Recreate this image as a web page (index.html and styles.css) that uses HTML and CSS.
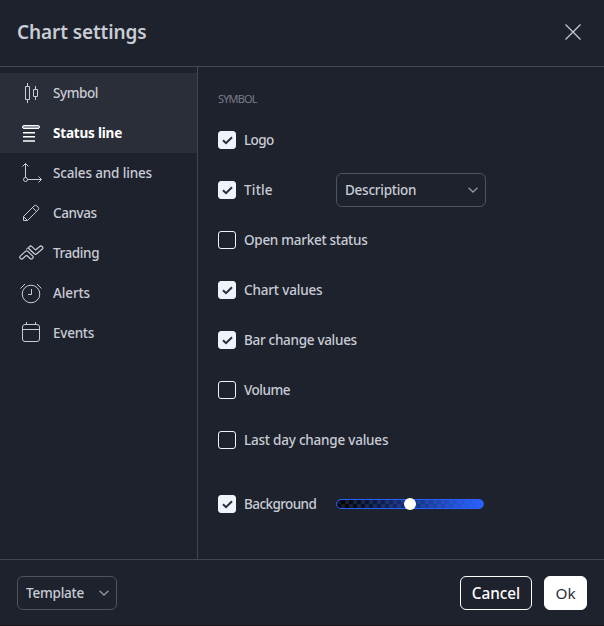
FILE: index.html
```html
<!DOCTYPE html>
<html lang="en">
<head>
<meta charset="utf-8">
<title>Chart settings</title>
<link rel="stylesheet" href="styles.css">
</head>
<body>
<div class="dialog">
  <header class="header">
    <h1 class="title">Chart settings</h1>
    <svg class="close" viewBox="0 0 18 18"><path d="M1.5 1.5l15 15M16.5 1.5l-15 15"/></svg>
  </header>
  <div class="body">
    <nav class="tabs">
      <div class="tab hover"><svg class="icon" viewBox="0 0 28 28"><path d="M8.5 7.5h4v13h-4zM10.500 4v3.500M10.500 20.500V24M16.500 10.500h4v7h-4zM18.500 7v3.500M18.500 17.500V21"/></svg><span class="t-symbol">Symbol</span></div>
      <div class="tab active"><svg class="icon" viewBox="0 0 28 28"><rect class="bar" x="5.500" y="6.500" width="17" height="3" rx="1.500"/><path class="lines" d="M6 13.700h12M6 17.700h12M6 21.900h12"/></svg><span class="t-status">Status line</span></div>
      <div class="tab"><svg class="icon" viewBox="0 0 28 28"><circle cx="8.500" cy="20.500" r="2"/><path d="M8.500 18.500V4.500M5.500 7.500l3-3 3 3M10.500 20.500h14M21.500 17.500l3 3-3 3"/></svg><span class="t-scales">Scales and lines</span></div>
      <div class="tab"><svg class="icon" viewBox="0 0 28 28"><path d="M6.500 17.500L17 7q1.500-1.500 3 0l1 1q1.500 1.500 0 3L10.500 21.500h-4zM6.500 17.500l4 4M15.500 8.500l4 4"/></svg><span class="t-canvas">Canvas</span></div>
      <div class="tab"><svg class="icon" viewBox="0 0 28 28"><path class="outer" d="M4.700 18.200L9.600 13.700 14.300 18.200M13.700 8.900L18.600 13.400 23.900 8.900"/><path d="M9 10.500l2-1.700 5.500 5.500"/><path class="inner" d="M4.700 18.200L9.600 13.700 14.300 18.200M13.700 8.900L18.600 13.400 23.900 8.900"/></svg><span class="t-trading">Trading</span></div>
      <div class="tab"><svg class="icon" viewBox="0 0 28 28"><circle cx="14" cy="15" r="8.800"/><path d="M14.500 10v5.500H11M3.500 9.500L8 5M20 5l4.500 4.500"/></svg><span class="t-alerts">Alerts</span></div>
      <div class="tab"><svg class="icon" viewBox="0 0 28 28"><rect x="5.500" y="5.500" width="17" height="17" rx="2.500"/><path d="M5.500 10.500h17M9.500 3v2.500M18.500 3v2.500"/></svg><span class="t-events">Events</span></div>
    </nav>
    <main class="content">
      <h2 class="section">SYMBOL</h2>
      <div class="row"><span class="box on"><svg viewBox="0 0 18 18"><path d="M5 9.200l3 3 6-6"/></svg></span><span class="l-logo">Logo</span></div>
      <div class="row"><div class="name"><span class="box on"><svg viewBox="0 0 18 18"><path d="M5 9.200l3 3 6-6"/></svg></span><span class="l-title">Title</span></div>
        <div class="select wide"><span class="l-desc">Description</span><svg class="caret" viewBox="0 0 10 6"><path d="M.5 .7L5 5l4.500-4.300"/></svg></div></div>
      <div class="row"><span class="box"></span><span class="l-open">Open market status</span></div>
      <div class="row"><span class="box on"><svg viewBox="0 0 18 18"><path d="M5 9.200l3 3 6-6"/></svg></span><span class="l-chart">Chart values</span></div>
      <div class="row"><span class="box on"><svg viewBox="0 0 18 18"><path d="M5 9.200l3 3 6-6"/></svg></span><span class="l-bar">Bar change values</span></div>
      <div class="row"><span class="box"></span><span class="l-volume">Volume</span></div>
      <div class="row"><span class="box"></span><span class="l-last">Last day change values</span></div>
      <div class="row last"><div class="name"><span class="box on"><svg viewBox="0 0 18 18"><path d="M5 9.200l3 3 6-6"/></svg></span><span class="l-back">Background</span></div>
        <div class="slider"><span class="thumb"></span></div></div>
    </main>
  </div>
  <footer class="footer">
    <div class="select"><span class="l-template">Template</span><svg class="caret" viewBox="0 0 10 6"><path d="M.5 .7L5 5l4.500-4.300"/></svg></div>
    <div class="actions"><button class="btn cancel">Cancel</button><button class="btn ok">Ok</button></div>
  </footer>
</div>
</body>
</html>
```
FILE: styles.css
```css
* { box-sizing: border-box; }
body { margin: 0; background: #1e222d; color: #c9ccd5; font: 500 13.5px/20px "Noto Sans", sans-serif; }
svg { fill: none; stroke: currentColor; display: block; flex: none; }
span { white-space: nowrap; }
.dialog { width: 604px; height: 626px; display: flex; flex-direction: column; border-bottom: 1px solid #171720; }
.header { height: 67px; display: flex; align-items: center; justify-content: space-between; padding: 0 22px 2px 17px; border-bottom: 1px solid #434651; }
.title { margin: 0; font-size: 19px; line-height: 28px; font-weight: 600; letter-spacing: -.1px; }
.close { width: 18px; height: 18px; stroke-width: 1.2; }
.body { display: flex; height: 492px; }
.tabs { width: 198px; padding-top: 6px; border-right: 1px solid #434651; }
.tab { height: 40px; display: flex; align-items: center; gap: 8px; padding-left: 17px; }
.hover, .active { background: #2a2e39; }
.active { color: #fff; font-weight: 700; }
.icon { width: 28px; height: 28px; }
.bar { fill: #9598a1; }
.lines { stroke-width: 1.5; }
.outer { stroke-width: 4.8; stroke-linecap: round; stroke-linejoin: round; }
.inner { stroke: #1e222d; stroke-width: 2.4; stroke-linecap: round; stroke-linejoin: round; }
.content { flex: 1; padding: 22px 0 0 20px; }
.section { margin: 0 0 6px; font-size: 11px; line-height: 20px; font-weight: 400; color: #787b86; letter-spacing: -.85px; }
.row { height: 50px; display: flex; align-items: center; gap: 8px; }
.name { width: 110px; display: flex; align-items: center; gap: 8px; }
.last { margin-top: 14px; }
.box { width: 18px; height: 18px; flex: none; border: 1px solid #f0f3fa; border-radius: 3px; }
.on { background: #f0f3fa; color: #2a2e39; }
.on svg { width: 18px; height: 18px; margin: -1px; stroke-width: 2; }
.select { width: 100px; height: 34px; display: flex; align-items: center; justify-content: space-between; padding: 0 7px 0 8px; border: 1px solid #50535e; border-radius: 6px; }
.wide { width: 150px; }
.caret { width: 10px; height: 6px; color: #9598a1; stroke-width: 1.3; }
.slider { width: 148px; height: 10px; display: flex; align-items: center; justify-content: center; border: 1px solid #2962ff; border-radius: 5px; background: linear-gradient(90deg, #2962ff00 0, #2962ff 100%), repeating-conic-gradient(#000 0 25%, #161922 0 50%) 0 0 / 8px 8px; }
.thumb { width: 12px; height: 12px; flex: none; border-radius: 50%; background: #fff; }
.footer { height: 66px; display: flex; align-items: center; justify-content: space-between; padding: 0 17px; border-top: 1px solid #434651; }
.actions { display: flex; gap: 12px; }
.btn { height: 34px; padding: 0; border: 1px solid #fff; border-radius: 6px; font: 500 15.3px/22px "Noto Sans", sans-serif; }
.cancel { width: 72px; background: none; color: #fff; }
.ok { width: 43px; background: #fff; color: #2a2e39; font-weight: 400; }
.t-symbol { letter-spacing: -.45px; }
.t-status { letter-spacing: -.2px; }
.t-scales { letter-spacing: -.15px; }
.t-canvas { letter-spacing: -.4px; }
.t-trading { letter-spacing: -.4px; }
.t-alerts { letter-spacing: -.1px; }
.t-events { letter-spacing: -.25px; }
.l-logo { letter-spacing: -.6px; }
.l-title { letter-spacing: .2px; }
.l-desc { letter-spacing: -.25px; }
.l-open { letter-spacing: -.28px; }
.l-chart { letter-spacing: -.16px; }
.l-bar { letter-spacing: -.3px; }
.l-volume { letter-spacing: -.5px; }
.l-last { letter-spacing: -.22px; }
.l-back { letter-spacing: -.58px; }
.l-template { letter-spacing: -.22px; }
```
